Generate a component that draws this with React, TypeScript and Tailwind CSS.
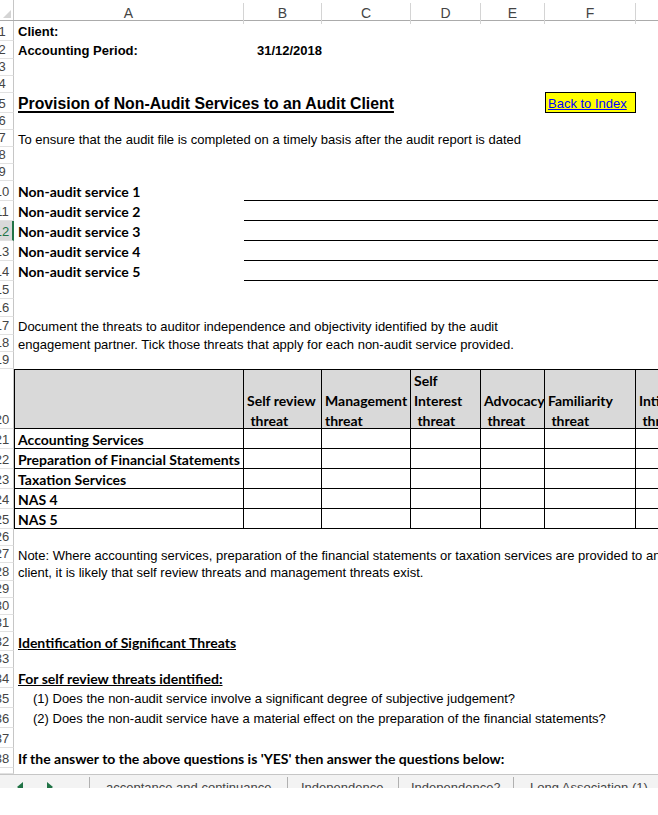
import React from 'react';

const cols = 'grid grid-cols-[230px_78px_89px_70px_64px_91px_200px]';
const calibri = "font-['Lato',sans-serif] font-bold text-[14px]";

function RowHead({ n, sel }: { n?: number; sel?: boolean }) {
  return (
    <div
      className={`w-[14px] shrink-0 overflow-hidden flex items-end border-b border-b-[#e1e1e1] ${
        sel ? 'bg-[#d9d9d9] border-r-2 border-r-[#217346] text-[#217346]' : 'border-r border-r-[#c6c6c6] text-[#444]'
      }`}
    >
      <div className="w-[22px] -ml-[9px] shrink-0 text-center text-[13px] leading-[17px]">{n}</div>
    </div>
  );
}

function Row({ n, h, sel, children }: { n?: number; h: string; sel?: boolean; children?: React.ReactNode }) {
  return (
    <div className={`flex ${h}`}>
      <RowHead n={n} sel={sel} />
      <div className={`flex-1 min-w-0 ${cols}`}>{children}</div>
    </div>
  );
}

function Txt({ children, className = '' }: { children: React.ReactNode; className?: string }) {
  return (
    <div className={`pl-[4px] pt-[2px] whitespace-nowrap flex items-center text-[13px] leading-[16px] min-h-0 ${className}`}>
      {children}
    </div>
  );
}

const services = ['Non-audit service 1', 'Non-audit service 2', 'Non-audit service 3', 'Non-audit service 4', 'Non-audit service 5'];

const headers: string[][] = [
  ['Self review', ' threat'],
  ['Management', 'threat'],
  ['Self', 'Interest', ' threat'],
  ['Advocacy', ' threat'],
  ['Familiarity', ' threat'],
  ['Intimidation', ' threat'],
];

const tableRows = ['Accounting Services', 'Preparation of Financial Statements', 'Taxation Services', 'NAS 4', 'NAS 5'];

export default function App() {
  return (
    <div className="w-[658px] h-[815px] overflow-hidden bg-white text-black font-['Liberation_Sans',Arial,sans-serif]">
      {/* column headers */}
      <div className="flex h-[21px] border-b border-[#ababab]">
        <div className="w-[14px] shrink-0 border-r border-[#c6c6c6] flex items-end justify-end p-[2px]">
          <svg width="8" height="8" viewBox="0 0 8 8">
            <polygon points="8,0 8,8 0,8" fill="#d4d4d4" />
          </svg>
        </div>
        <div className={`flex-1 ${cols} text-[14px] text-[#444]`}>
          {['A', 'B', 'C', 'D', 'E', 'F', ''].map((c, i) => (
            <div key={i} className="border-r border-[#d4d4d4] mt-[3px] flex items-center justify-center">
              {c}
            </div>
          ))}
        </div>
      </div>

      <Row n={1} h="h-[20px]">
        <Txt className="font-bold">Client:</Txt>
      </Row>
      <Row n={2} h="h-[18px]">
        <Txt className="font-bold">Accounting Period:</Txt>
        <div className="flex items-center justify-end pt-[2px] text-[13px] leading-[16px] font-bold">31/12/2018</div>
      </Row>
      <Row n={3} h="h-[17px]" />
      <Row n={4} h="h-[17px]" />
      <Row n={5} h="h-[20px]">
        <Txt className="text-[15.8px] font-bold underline underline-offset-2 decoration-2">
          Provision of Non-Audit Services to an Audit Client
        </Txt>
        <div />
        <div />
        <div />
        <div />
        <div className="-mt-[1px] border border-black bg-[#ffff00] pl-[2px] pt-[2px] text-[13px] leading-[16px] text-[#0000ff] underline flex items-center">
          Back to Index
        </div>
      </Row>
      <Row n={6} h="h-[17px]" />
      <Row n={7} h="h-[17px]">
        <Txt>To ensure that the audit file is completed on a timely basis after the audit report is dated</Txt>
      </Row>
      <Row n={8} h="h-[17px]" />
      <Row n={9} h="h-[17px]" />
      {services.map((s, i) => (
        <Row key={s} n={10 + i} h="h-[20px]" sel={i === 2}>
          <Txt className={calibri}>{s}</Txt>
          <div className="col-span-6 border-b border-black" />
        </Row>
      ))}
      <Row n={15} h="h-[18px]" />
      <Row n={16} h="h-[18px]" />
      <Row n={17} h="h-[18px]">
        <Txt>Document the threats to auditor independence and objectivity identified by the audit</Txt>
      </Row>
      <Row n={18} h="h-[17px]">
        <Txt>engagement partner. Tick those threats that apply for each non-audit service provided.</Txt>
      </Row>
      <Row n={19} h="h-[17px]" />

      {/* threats table */}
      <Row n={20} h="h-[60px]">
        <div className="bg-[#d9d9d9] border-t border-l border-r border-b border-black" />
        {headers.map((lines, i) => (
          <div
            key={i}
            className={`bg-[#d9d9d9] border-t border-r border-b border-black flex flex-col justify-end pl-[3px] ${calibri} leading-[20px] overflow-hidden`}
          >
            <div className="translate-y-[3px]">
              {lines.map((l) => (
                <div key={l} className="whitespace-pre">
                  {l}
                </div>
              ))}
            </div>
          </div>
        ))}
      </Row>
      {tableRows.map((r, i) => (
        <Row key={r} n={21 + i} h="h-[20px]">
          <div className={`border-l border-r border-b border-black pl-[3px] pt-[2px] flex items-center whitespace-nowrap leading-[16px] ${calibri}`}>
            {r}
          </div>
          {headers.map((_, j) => (
            <div key={j} className="border-r border-b border-black" />
          ))}
        </Row>
      ))}

      <Row n={26} h="h-[17px]" />
      <Row n={27} h="h-[17px]">
        <Txt>
          Note: Where accounting services, preparation of the financial statements or taxation services are provided to an audit
        </Txt>
      </Row>
      <Row n={28} h="h-[18px]">
        <Txt>client, it is likely that self review threats and management threats exist.</Txt>
      </Row>
      <Row n={29} h="h-[17px]" />
      <Row n={30} h="h-[17px]" />
      <Row n={31} h="h-[17px]" />
      <Row n={32} h="h-[19px]">
        <Txt className={`${calibri} underline`}>Identification of Significant Threats</Txt>
      </Row>
      <Row n={33} h="h-[17px]" />
      <Row n={34} h="h-[20px]">
        <Txt className={`${calibri} underline`}>For self review threats identified:</Txt>
      </Row>
      <Row n={35} h="h-[20px]">
        <Txt className="pl-[19px]">(1) Does the non-audit service involve a significant degree of subjective judgement?</Txt>
      </Row>
      <Row n={36} h="h-[20px]">
        <Txt className="pl-[19px]">(2) Does the non-audit service have a material effect on the preparation of the financial statements?</Txt>
      </Row>
      <Row n={37} h="h-[20px]" />
      <Row n={38} h="h-[20px]">
        <Txt className={calibri}>If the answer to the above questions is 'YES' then answer the questions below:</Txt>
      </Row>
      <Row h="h-[6px]" />

      {/* sheet tabs */}
      <div className="h-[14px] border-t border-[#c6c6c6] bg-[#f3f3f3] flex overflow-hidden text-[13px] leading-[13px] text-[#444]">
        <div className="w-[89px] shrink-0 flex gap-[24px] pl-[17px] pt-[7px]">
          <svg width="6" height="10" viewBox="0 0 6 10">
            <polygon points="6,0 6,10 0,5" fill="#217346" />
          </svg>
          <svg width="6" height="10" viewBox="0 0 6 10">
            <polygon points="0,0 0,10 6,5" fill="#217346" />
          </svg>
        </div>
        <div className="w-[198px] shrink-0 border-l border-[#b0b0b0] mt-[2px] pl-[16px] pt-[4px]">acceptance and continuance</div>
        <div className="w-[111px] shrink-0 border-l border-[#b0b0b0] mt-[2px] pl-[13px] pt-[4px]">Independence</div>
        <div className="w-[115px] shrink-0 border-l border-[#b0b0b0] mt-[2px] pl-[12px] pt-[4px]">Independence2</div>
        <div className="w-[145px] shrink-0 border-l border-[#b0b0b0] mt-[2px] pl-[16px] pt-[4px] whitespace-nowrap">
          Long Association (1)
        </div>
      </div>
    </div>
  );
}
